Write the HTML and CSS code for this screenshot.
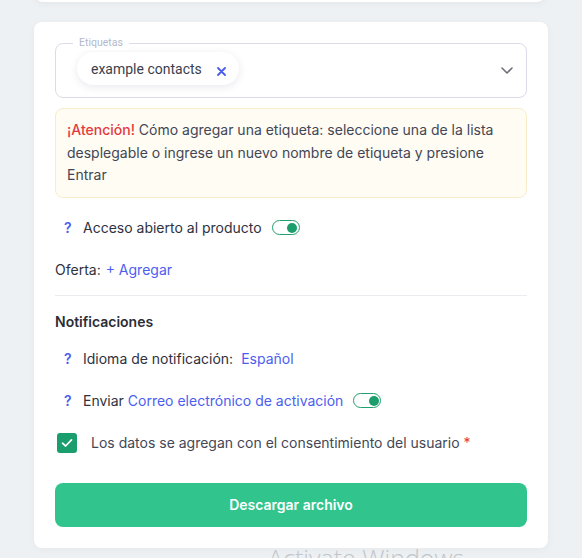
FILE: index.html
```html
<!DOCTYPE html>
<html lang="es">
<head>
<meta charset="utf-8">
<title>Etiquetas</title>
<link rel="stylesheet" href="styles.css">
</head>
<body>
<div class="page">
  <div class="top-card"></div>
  <div class="card">
    <div class="select">
      <span class="legend">Etiquetas</span>
      <div class="chip">
        <span class="chip-text">example contacts</span>
        <svg class="chip-x" width="9" height="9" viewBox="0 0 9 9"><path d="M1 1L8 8M8 1L1 8" stroke="#4a5cf0" stroke-width="1.8" stroke-linecap="round"/></svg>
      </div>
      <svg class="chevron" width="12" height="7" viewBox="0 0 12 7"><path d="M1 1L6 6L11 1" fill="none" stroke="#6c6f79" stroke-width="1.6" stroke-linecap="round" stroke-linejoin="round"/></svg>
    </div>

    <div class="alert"><span class="alert-strong">¡Atención!</span> Cómo agregar una etiqueta: seleccione una de la lista desplegable o ingrese un nuevo nombre de etiqueta y presione Entrar</div>

    <div class="row row-access">
      <span class="help">?</span>
      <span class="label">Acceso abierto al producto</span>
      <span class="toggle"><span class="knob"></span></span>
    </div>

    <div class="row row-offer">
      <span class="label">Oferta:</span>
      <span class="link add">+ Agregar</span>
    </div>

    <div class="divider"></div>

    <div class="row row-title">
      <span class="title">Notificaciones</span>
    </div>

    <div class="row row-lang">
      <span class="help">?</span>
      <span class="label">Idioma de notificación:</span>
      <span class="link lang">Español</span>
    </div>

    <div class="row row-send">
      <span class="help">?</span>
      <span class="label">Enviar <span class="link">Correo electrónico de activación</span></span>
      <span class="toggle"><span class="knob"></span></span>
    </div>

    <div class="row row-consent">
      <span class="checkbox">
        <svg width="12" height="10" viewBox="0 0 12 10"><path d="M1.5 5.2L4.6 8L10.5 1.8" fill="none" stroke="#fff" stroke-width="1.7" stroke-linecap="round" stroke-linejoin="round"/></svg>
      </span>
      <span class="label consent">Los datos se agregan con el consentimiento del usuario <span class="req">*</span></span>
    </div>

    <button class="btn" type="button">Descargar archivo</button>
  </div>
</div>
<div class="watermark">Activate Windows</div>
</body>
</html>
```

FILE: styles.css
```css
* { box-sizing: border-box; }
html, body {
  margin: 0;
  padding: 0;
  height: 558px;
  overflow: hidden;
}
body {
  background: #eef1f3;
  font-family: "Inter", "Noto Sans", sans-serif;
  font-size: 14px;
  color: #2f3140;
}
.page {
  width: 582px;
  padding: 0 34px;
}
.top-card {
  margin: -20px 3px 0 1px;
  height: 22px;
  background: #fff;
  border-radius: 0 0 8px 8px;
  box-shadow: 0 2px 6px rgba(40, 50, 70, 0.05);
}
.card {
  margin-top: 20px;
  background: #fff;
  border-radius: 8px;
  padding: 21px 21px 21px;
  box-shadow: 0 2px 8px rgba(40, 50, 70, 0.04);
}
.select {
  position: relative;
  height: 55px;
  border: 1px solid #dcdbe9;
  border-radius: 8px;
  display: flex;
  align-items: center;
  padding: 0 12px 0 21px;
}
.legend {
  position: absolute;
  top: -8px;
  left: 17px;
  padding: 0 6px;
  background: #fff;
  font-family: "Roboto", sans-serif;
  font-size: 10.5px;
  line-height: 14px;
  color: #b3b9cc;
}
.chip {
  display: flex;
  align-items: center;
  height: 33px;
  margin-top: -4px;
  padding: 0 13px 0 14px;
  border-radius: 17px;
  background: #fff;
  box-shadow: 0 2px 9px rgba(30, 40, 80, 0.10);
}
.chip-text {
  font-family: "Roboto", sans-serif;
  font-size: 14px;
  color: #3b3e4b;
}
.chip-x {
  margin-left: 15px;
  margin-top: 6px;
}
.chevron {
  margin-left: auto;
  margin-right: 1px;
}
.alert {
  margin-top: 10px;
  background: #fffcf3;
  border: 1px solid #f8eccb;
  border-radius: 8px;
  padding: 10px 11px 10px;
  line-height: 22.5px;
  color: #424656;
}
.alert-strong {
  color: #e53940;
  font-weight: 500;
}
.row {
  display: flex;
  align-items: center;
  height: 20px;
}
.help {
  width: 19px;
  margin-left: 9px;
  color: #4b5ef0;
  font-weight: 600;
}
.label { white-space: nowrap; }
.link { color: #4b5ef0; }
.toggle {
  display: inline-flex;
  align-items: center;
  justify-content: flex-end;
  width: 28px;
  height: 15px;
  margin-left: 10px;
  padding: 0 1.5px;
  border: 1.5px solid #22a06f;
  border-radius: 8px;
}
.knob {
  width: 10px;
  height: 10px;
  border-radius: 50%;
  background: #1b9e6c;
}
.row-access { margin-top: 20px; }
.row-offer { margin-top: 22px; }
.add { margin-left: 5px; }
.divider {
  margin-top: 15px;
  height: 1px;
  background: #eaecf0;
}
.row-title { margin-top: 16px; }
.title { font-weight: 600; color: #2b2d38; }
.row-lang { margin-top: 17px; }
.lang { margin-left: 8px; }
.row-send { margin-top: 22px; }
.row-consent { margin-top: 22px; }
.checkbox {
  display: inline-flex;
  align-items: center;
  justify-content: center;
  width: 20px;
  height: 20px;
  margin-left: 2px;
  margin-right: 14px;
  border-radius: 3px;
  background: #1a9e6d;
}
.consent { color: #434756; }
.req { color: #e53940; }
.btn {
  display: block;
  width: 100%;
  height: 44px;
  margin-top: 30px;
  border: 0;
  border-radius: 8px;
  background: #31c48d;
  color: #fff;
  font-family: "Inter", "Noto Sans", sans-serif;
  font-size: 14px;
  font-weight: 600;
}
.watermark {
  position: absolute;
  left: 268px;
  top: 541px;
  font-family: "Open Sans", sans-serif;
  font-weight: 300;
  font-size: 25px;
  color: #c2c6ca;
  white-space: nowrap;
}
```
